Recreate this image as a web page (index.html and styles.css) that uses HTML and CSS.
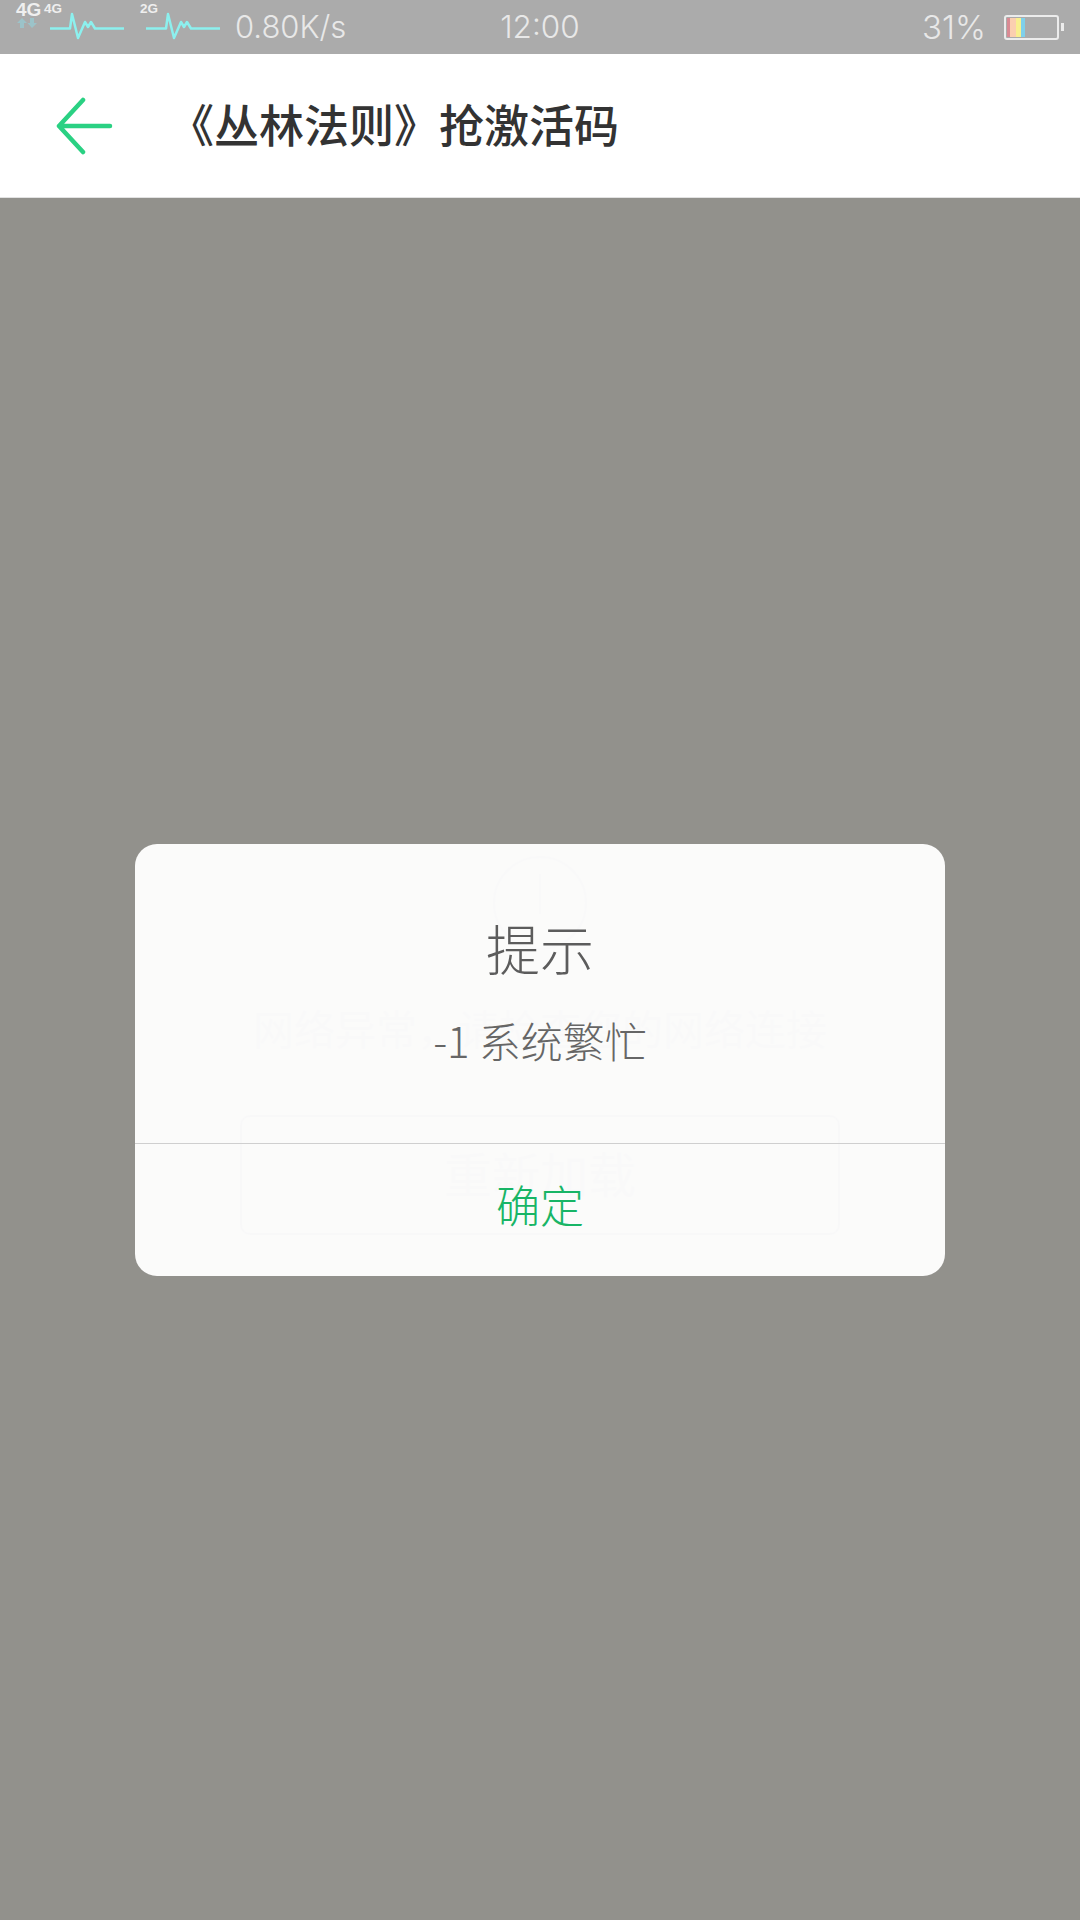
FILE: index.html
```html
<!DOCTYPE html>
<html lang="zh-CN">
<head>
<meta charset="utf-8">
<title>《丛林法则》抢激活码</title>
<link rel="stylesheet" href="styles.css">
</head>
<body>
<div class="screen">
  <div class="status">
    <div class="status-left">
      <svg class="signals" width="226" height="54" viewBox="0 0 226 54">
        <text class="net-main" x="16" y="16">4G</text>
        <path class="net-arrow" d="M22 18L27 23H24V28H20V23H17ZM30 18H34V23H37L32 28L27.500 23H30Z"/>
        <text class="net-sub" x="44" y="13">4G</text>
        <path class="wave" d="M50 28.500H70L72 14L78 38L85 22L88 27L91 22L95 28.500H124"/>
        <text class="net-sub" x="140" y="13">2G</text>
        <path class="wave" d="M146 28.500H166L168 14L174 38L181 22L184 27L187 22L191 28.500H220"/>
      </svg>
      <span class="status-text speed">0.80K/s</span>
    </div>
    <span class="status-text clock">12:00</span>
    <div class="status-right">
      <span class="status-text percent">31%</span>
      <div class="battery">
        <div class="battery-body">
          <i class="cell cell-red"></i><i class="cell cell-peach"></i><i class="cell cell-yellow"></i><i class="cell cell-blue"></i>
        </div>
        <i class="battery-tip"></i>
      </div>
    </div>
  </div>

  <header class="toolbar">
    <svg class="back" width="58" height="58" viewBox="0 0 58 58">
      <path d="M27 3L3 29L27 55M3 29H54"/>
    </svg>
    <h1 class="title">《丛林法则》抢激活码</h1>
  </header>

  <main class="content">
    <div class="ghost-icon"><i class="ghost-mark"></i></div>
    <p class="ghost-text">网络异常，请检查您的网络连接</p>
    <div class="ghost-button">重新加载</div>

    <div class="dialog">
      <div class="dialog-body">
        <h2 class="dialog-title">提示</h2>
        <p class="dialog-message">-1 系统繁忙</p>
      </div>
      <div class="dialog-action">确定</div>
    </div>
  </main>
</div>
</body>
</html>
```
FILE: styles.css
```css
* { box-sizing: border-box; }
html, body { margin: 0; padding: 0; }
body {
  width: 1080px;
  height: 1920px;
  overflow: hidden;
  font-family: "Noto Sans CJK SC", "Noto Sans", sans-serif;
}
.screen {
  width: 1080px;
  height: 1920px;
  display: flex;
  flex-direction: column;
  background: #92918c;
}

/* status bar */
.status {
  height: 54px;
  flex: none;
  background: #ababab;
  display: grid;
  grid-template-columns: 1fr auto 1fr;
  align-items: center;
  color: #e8e8e8;
}
.status-left { display: flex; align-items: center; }
.signals { display: block; flex: none; }
.net-main { font: 700 19px "Liberation Sans", sans-serif; fill: #efefef; }
.net-sub { font: 700 13.500px "Liberation Sans", sans-serif; fill: #efefef; }
.net-arrow { fill: #9cc3c9; }
.wave { fill: none; stroke: #8cf0ee; stroke-width: 2.500; stroke-linejoin: round; }
.status-text {
  font-family: Inter, "Liberation Sans", sans-serif;
  font-weight: 300;
  font-size: 31.500px;
  line-height: 54px;
}
.speed { margin-left: 9px; font-size: 31px; }
.status-right {
  display: flex;
  align-items: center;
  justify-content: flex-end;
  padding-right: 16px;
}
.percent { margin-right: 18px; font-size: 33px; }
.battery { display: flex; align-items: center; }
.battery-body {
  width: 55px;
  height: 25px;
  border: 2px solid #ececec;
  border-radius: 3px;
  display: flex;
  padding: 1px;
}
.cell { display: block; height: 100%; }
.cell-red { width: 3px; background: #d98a93; }
.cell-peach { width: 6px; background: #fbcfb0; }
.cell-yellow { width: 5px; background: #f8ef8f; }
.cell-blue { width: 4px; background: #7fd0ea; }
.battery-tip {
  display: block;
  width: 3px;
  height: 8px;
  margin-left: 2px;
  background: #ececec;
}

/* toolbar */
.toolbar {
  height: 144px;
  flex: none;
  background: #fff;
  border-bottom: 1px solid #e2e2e2;
  display: flex;
  align-items: center;
  padding-left: 56px;
}
.back { display: block; flex: none; }
.back path {
  fill: none;
  stroke: #2ad183;
  stroke-width: 4.500;
  stroke-linecap: round;
  stroke-linejoin: round;
}
.title {
  margin: 0 0 4px 55px;
  font-size: 45px;
  font-weight: 500;
  line-height: 56px;
  color: #333;
  white-space: nowrap;
}

/* page behind the dialog */
.content {
  flex: 1;
  position: relative;
  display: flex;
  flex-direction: column;
  align-items: center;
  padding-top: 658px;
}
.ghost-icon {
  width: 94px;
  height: 94px;
  border: 2px solid #666;
  border-radius: 50%;
  display: flex;
  justify-content: center;
  padding-top: 16px;
}
.ghost-mark { display: block; width: 2px; height: 40px; background: #666; }
.ghost-text {
  margin: 47px 0 0;
  font-size: 41px;
  line-height: 60px;
  color: #666;
  white-space: nowrap;
}
.ghost-button {
  margin-top: 58px;
  width: 600px;
  height: 120px;
  border: 2px solid #555;
  border-radius: 10px;
  display: flex;
  justify-content: center;
  padding-top: 23px;
  font-size: 48px;
  line-height: 64px;
  color: #666;
}

/* dialog */
.dialog {
  position: absolute;
  left: 135px;
  top: 646px;
  width: 810px;
  height: 432px;
  border-radius: 22px;
  background: rgba(254, 254, 254, 0.97);
  display: flex;
  flex-direction: column;
  text-align: center;
}
.dialog-body {
  height: 300px;
  flex: none;
  border-bottom: 1px solid #cfcfcf;
  padding-top: 66px;
}
.dialog-title {
  margin: 0;
  font-size: 54px;
  font-weight: 300;
  line-height: 76px;
  color: #5c5c5c;
}
.dialog-message {
  margin: 22px 0 0;
  font-size: 42px;
  font-weight: 300;
  line-height: 64px;
  color: #666;
}
.dialog-action {
  padding-top: 28px;
  font-size: 44px;
  font-weight: 300;
  line-height: 64px;
  color: #18b566;
}
```
